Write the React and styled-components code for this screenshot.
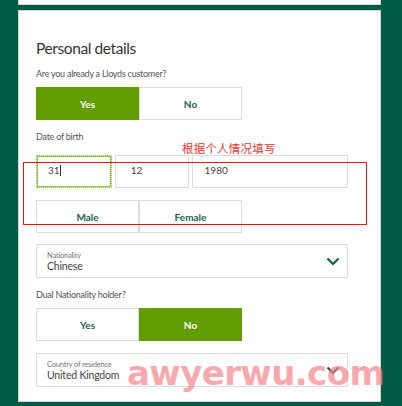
import React from 'react'
import styled, { createGlobalStyle } from 'styled-components'

const GlobalStyle = createGlobalStyle`
  html, body {
    margin: 0;
    padding: 0;
    background: #035a44;
  }
  body {
    font-family: Lato, "Noto Sans", sans-serif;
    color: #333;
  }
`

const Page = styled.div`
  width: 402px;
  height: 406px;
  overflow: hidden;
  position: relative;
  padding: 0 21px 0 18px;
  box-sizing: border-box;
`

const TopPanel = styled.div`
  height: 5px;
  background: #fff;
  border: 1px solid #cfd8d4;
  border-top: none;
  box-sizing: border-box;
`

const Panel = styled.div`
  margin-top: 5px;
  height: 392px;
  background: #fff;
  border: 1px solid #cfd8d4;
  box-sizing: border-box;
  padding: 27px 32px 0 17px;
  position: relative;
`

const Title = styled.h2`
  margin: 0;
  font-weight: 400;
  font-size: 15.5px;
  letter-spacing: -0.4px;
  color: #333;
  line-height: 20px;
`

const Label = styled.div`
  font-size: 9px;
  letter-spacing: -0.25px;
  color: #555;
  line-height: 12px;
  margin-top: ${(p) => p.$top || 0}px;
`

const Toggle = styled.div`
  display: flex;
  width: 206px;
  margin-top: ${(p) => p.$top || 0}px;
`

const ToggleButton = styled.div`
  flex: 1;
  height: 33px;
  display: flex;
  align-items: center;
  justify-content: center;
  font-size: 10px;
  font-weight: 700;
  box-sizing: border-box;
  background: ${(p) => (p.$active ? '#629d00' : '#fff')};
  color: ${(p) => (p.$active ? '#fff' : '#1d6150')};
  border: 1px solid ${(p) => (p.$active ? '#629d00' : '#dcdcdc')};
`

const DateRow = styled.div`
  display: flex;
  gap: 3px;
  margin-top: 12px;
`

const DateInput = styled.div`
  width: ${(p) => p.$w}px;
  height: 33px;
  box-sizing: border-box;
  border: ${(p) => (p.$focus ? '1px dotted #8bc53f' : '1px solid #dcdcdc')};
  outline: ${(p) => (p.$focus ? '1px solid #8bc53f' : 'none')};
  outline-offset: -2px;
  font-size: 10px;
  color: #444;
  padding: 8px 0 0 ${(p) => p.$pad}px;
`

const Caret = styled.span`
  display: inline-block;
  width: 1px;
  height: 11px;
  background: #333;
  vertical-align: -2px;
`

const Select = styled.div`
  width: 312px;
  height: 34px;
  box-sizing: border-box;
  border: 1px solid #dcdcdc;
  margin-top: ${(p) => p.$top || 0}px;
  display: flex;
  align-items: center;
  justify-content: space-between;
  padding: 0 7px 0 10px;
`

const SelectText = styled.div`
  display: flex;
  flex-direction: column;
`

const SelectLabel = styled.span`
  font-size: 7.5px;
  color: #777;
  line-height: 9px;
  letter-spacing: -0.2px;
`

const SelectValue = styled.span`
  font-size: 10.5px;
  color: #444;
  line-height: 12px;
  letter-spacing: -0.2px;
`

const Annotation = styled.div`
  position: absolute;
  left: 163px;
  top: 129px;
  font-family: "Noto Sans CJK SC", sans-serif;
  font-size: 11.5px;
  color: #f5302a;
  letter-spacing: 0.2px;
`

const RedBox = styled.div`
  position: absolute;
  left: 4px;
  top: 151px;
  width: 344px;
  height: 63px;
  border: 1.5px solid #f01010;
  box-sizing: border-box;
  pointer-events: none;
`

const Watermark = styled.div`
  position: absolute;
  left: 108px;
  top: 345px;
  font-family: "DejaVu Sans", sans-serif;
  font-weight: 700;
  font-size: 34px;
  line-height: 34px;
  letter-spacing: -0.6px;
  white-space: nowrap;
  color: rgba(246, 130, 136, 0.7);
  pointer-events: none;
`

const Chevron = () => (
  <svg width="14" height="9" viewBox="0 0 14 9">
    <path d="M1.5 1.5 L7 7 L12.5 1.5" fill="none" stroke="#0f5f4c" strokeWidth="2.2" />
  </svg>
)

const App = () => (
  <>
    <GlobalStyle />
    <Page>
      <TopPanel />
      <Panel>
        <Title>Personal details</Title>
        <Label $top={10}>Are you already a Lloyds customer?</Label>
        <Toggle $top={7}>
          <ToggleButton $active>Yes</ToggleButton>
          <ToggleButton>No</ToggleButton>
        </Toggle>
        <Label $top={11}>Date of birth</Label>
        <DateRow>
          <DateInput $w={76} $pad={11} $focus>
            31<Caret />
          </DateInput>
          <DateInput $w={74} $pad={15}>12</DateInput>
          <DateInput $w={157} $pad={12}>1980</DateInput>
        </DateRow>
        <Toggle $top={12}>
          <ToggleButton>Male</ToggleButton>
          <ToggleButton>Female</ToggleButton>
        </Toggle>
        <Select $top={11}>
          <SelectText>
            <SelectLabel>Nationality</SelectLabel>
            <SelectValue>Chinese</SelectValue>
          </SelectText>
          <Chevron />
        </Select>
        <Label $top={11}>Dual Nationality holder?</Label>
        <Toggle $top={7}>
          <ToggleButton>Yes</ToggleButton>
          <ToggleButton $active>No</ToggleButton>
        </Toggle>
        <Select $top={12}>
          <SelectText>
            <SelectLabel>Country of residence</SelectLabel>
            <SelectValue>United Kingdom</SelectValue>
          </SelectText>
          <Chevron />
        </Select>
        <Annotation>根据个人情况填写</Annotation>
        <RedBox />
        <Watermark>awyerwu.com</Watermark>
      </Panel>
    </Page>
  </>
)

export default App
